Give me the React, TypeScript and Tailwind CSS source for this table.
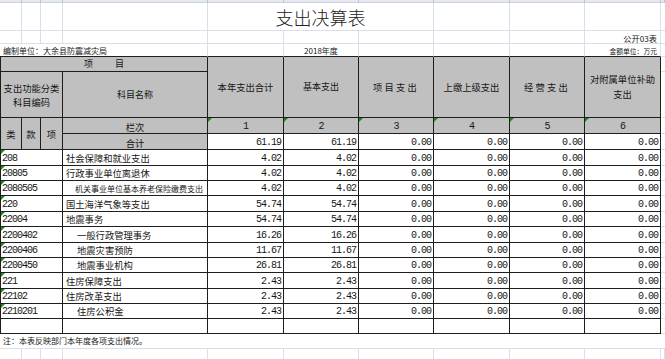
import React from "react";

const D = "border-[#1e1e1e]";
const L = "border-[#d9deea]";
const CJK = "font-['Noto_Sans_CJK_SC',sans-serif]";
const NUM = "font-['Liberation_Mono','Noto_Sans_CJK_SC',monospace] text-[10px] tracking-[-1px]";

const Tri = () => (
  <span className="absolute left-0 top-0 h-0 w-0 border-t-[4px] border-r-[4px] border-t-[#1a8a1a] border-r-transparent" />
);

type Row = { code: string; name: string; total: string; basic: string; indent?: boolean; small?: boolean; h: string };

const rows: Row[] = [
  { code: "208", name: "社会保障和就业支出", total: "4.02", basic: "4.02", h: "h-[16px]" },
  { code: "20805", name: "行政事业单位离退休", total: "4.02", basic: "4.02", h: "h-[15px]" },
  { code: "2080505", name: "机关事业单位基本养老保险缴费支出", total: "4.02", basic: "4.02", indent: true, small: true, h: "h-[15px]" },
  { code: "220", name: "国土海洋气象等支出", total: "54.74", basic: "54.74", h: "h-[16px]" },
  { code: "22004", name: "地震事务", total: "54.74", basic: "54.74", h: "h-[15px]" },
  { code: "2200402", name: "一般行政管理事务", total: "16.26", basic: "16.26", indent: true, h: "h-[16px]" },
  { code: "2200406", name: "地震灾害预防", total: "11.67", basic: "11.67", indent: true, h: "h-[15px]" },
  { code: "2200450", name: "地震事业机构", total: "26.81", basic: "26.81", indent: true, h: "h-[15px]" },
  { code: "221", name: "住房保障支出", total: "2.43", basic: "2.43", h: "h-[16px]" },
  { code: "22102", name: "住房改革支出", total: "2.43", basic: "2.43", h: "h-[15px]" },
  { code: "2210201", name: "住房公积金", total: "2.43", basic: "2.43", indent: true, h: "h-[15px]" },
];

const widths = ["w-[22px]", "w-[19px]", "w-[22px]", "w-[145px]", "w-[76px]", "w-[75px]", "w-[75px]", "w-[76px]", "w-[75px]", "w-[76px]", "w-[4px]"];

const cellD = `p-0 border-r border-b ${D}`;
const cellL = `p-0 border-r border-b ${L}`;
const lastRowTop = "p-0 border-r border-b border-r-[#d9deea] border-b-[#1e1e1e]";

const Val = ({ v }: { v: string }) => (
  <td className={`${cellD} bg-white text-right align-bottom pr-[2px] pb-[1px] leading-[10px] ${NUM}`}>{v}</td>
);

export default function App() {
  return (
    <div className={`w-[665px] h-[359px] overflow-hidden bg-white text-[#161616] ${CJK}`}>
      <table className="border-separate border-spacing-0 table-fixed w-[665px]">
        <colgroup>
          {widths.map((w, i) => (
            <col key={i} className={w} />
          ))}
        </colgroup>
        <tbody>
          {/* column header strip */}
          <tr className="h-[3px]">
            {widths.map((_, i) => (
              <td key={i} className="p-0 bg-[#e6eaf0] border-r border-b border-r-[#b8c3d1] border-b-[#c9d2de]" />
            ))}
          </tr>
          {/* title row */}
          <tr className="h-[28px]">
            <td className={cellL} />
            <td className={cellL} />
            <td className={cellL} />
            <td className={cellL} />
            <td colSpan={3} className={`${cellL} text-center align-middle text-[18px] leading-[20px] font-light text-[#222]`}>
              支出决算表
            </td>
            <td className={cellL} />
            <td className={cellL} />
            <td className={cellL} />
            <td className={`p-0 border-b ${L}`} />
          </tr>
          {/* 公开03表 */}
          <tr className="h-[13px]">
            <td className={cellL} />
            <td className={cellL} />
            <td className={cellL} />
            <td className={cellL} />
            <td className={cellL} />
            <td className={cellL} />
            <td className={cellL} />
            <td className={cellL} />
            <td className={cellL} />
            <td className={`${cellL} text-right pr-[3px] text-[8.2px] leading-[10px] align-bottom`}>公开03表</td>
            <td className={`p-0 border-b ${L}`} />
          </tr>
          {/* 编制单位 */}
          <tr className="h-[13px]">
            <td colSpan={4} className={`${lastRowTop} pl-[3px] text-[8px] leading-[10px] align-bottom whitespace-nowrap`}>
              编制单位：大余县防震减灾局
            </td>
            <td className={lastRowTop} />
            <td className={`${lastRowTop} text-center text-[8px] leading-[10px] align-bottom whitespace-nowrap`}>2018年度</td>
            <td className={lastRowTop} />
            <td className={lastRowTop} />
            <td className={lastRowTop} />
            <td className={`${lastRowTop} text-right pr-[3px] text-[6.8px] leading-[10px] align-bottom whitespace-nowrap`}>
              金额单位：万元
            </td>
            <td className={`p-0 border-b ${L}`} />
          </tr>
          {/* header row 1 */}
          <tr className="h-[15px]">
            <td colSpan={4} className={`${cellD} border-l bg-[#c0c0c0] text-center text-[9px] leading-[10px] align-middle`}>
              项<span className="inline-block w-[22px]" />目
            </td>
            <td rowSpan={2} className={`${cellD} bg-[#c0c0c0] text-center text-[9.3px] leading-[12px]`}>本年支出合计</td>
            <td rowSpan={2} className={`${cellD} bg-[#c0c0c0] text-center text-[9px] leading-[12px]`}>基本支出</td>
            <td rowSpan={2} className={`${cellD} bg-[#c0c0c0] text-center text-[9.3px] leading-[12px] tracking-[2.2px]`}>项目支出</td>
            <td rowSpan={2} className={`${cellD} bg-[#c0c0c0] text-center text-[9.3px] leading-[12px]`}>上缴上级支出</td>
            <td rowSpan={2} className={`${cellD} bg-[#c0c0c0] text-center text-[9.3px] leading-[12px] tracking-[2.2px]`}>经营支出</td>
            <td rowSpan={2} className={`${cellD} bg-[#c0c0c0] text-center text-[9.3px] leading-[15px]`}>
              对附属单位补助
              <br />
              支出
            </td>
            <td className={`p-0 border-b ${L}`} />
          </tr>
          {/* header row 2 */}
          <tr className="h-[46px]">
            <td colSpan={3} className={`${cellD} border-l bg-[#c0c0c0] text-center text-[9.3px] leading-[14px]`}>
              支出功能分类
              <br />
              科目编码
            </td>
            <td className={`${cellD} bg-[#c0c0c0] text-center text-[9px] leading-[12px]`}>科目名称</td>
            <td className={`p-0 border-b ${L}`} />
          </tr>
          {/* header row 3 */}
          <tr className="h-[16px]">
            <td rowSpan={2} className={`${cellD} border-l bg-[#c0c0c0] text-center text-[9.3px] leading-[12px]`}>类</td>
            <td rowSpan={2} className={`${cellD} bg-[#c0c0c0] text-center text-[9.3px] leading-[12px]`}>款</td>
            <td rowSpan={2} className={`${cellD} bg-[#c0c0c0] text-center text-[9.3px] leading-[12px]`}>项</td>
            <td className={`${cellD} bg-[#c0c0c0] text-center text-[9.3px] leading-[10px] align-bottom pb-[1px]`}>栏次</td>
            {["1", "2", "3", "4", "5", "6"].map((n) => (
              <td key={n} className={`${cellD} relative bg-[#c0c0c0] text-center align-bottom pb-[1px] leading-[10px] ${NUM}`}>
                <Tri />
                {n}
              </td>
            ))}
            <td className={`p-0 border-b ${L}`} />
          </tr>
          {/* header row 4 */}
          <tr className="h-[16px]">
            <td className={`${cellD} bg-[#c0c0c0] text-center text-[9.3px] leading-[10px] align-bottom pb-[1px]`}>合计</td>
            <Val v="61.19" />
            <Val v="61.19" />
            <Val v="0.00" />
            <Val v="0.00" />
            <Val v="0.00" />
            <Val v="0.00" />
            <td className={`p-0 border-b ${L}`} />
          </tr>
          {rows.map((r) => (
            <tr key={r.code} className={r.h}>
              <td colSpan={3} className={`${cellD} border-l relative bg-white align-bottom pl-[1px] pb-[1px] leading-[10px] ${NUM}`}>
                <Tri />
                {r.code}
              </td>
              <td
                className={`${cellD} bg-white align-bottom pb-[1px] whitespace-nowrap ${
                  r.small ? "text-[8px] leading-[10px]" : "text-[9.3px] leading-[11px]"
                } ${r.indent ? (r.small ? "pl-[12px]" : "pl-[14px]") : "pl-[3px]"}`}
              >
                {r.name}
              </td>
              <Val v={r.total} />
              <Val v={r.basic} />
              <Val v="0.00" />
              <Val v="0.00" />
              <Val v="0.00" />
              <Val v="0.00" />
              <td className={`p-0 border-b ${L}`} />
            </tr>
          ))}
          {/* blank row */}
          <tr className="h-[15px]">
            <td colSpan={3} className={`${cellD} border-l bg-white`} />
            <td className={`${cellD} bg-white`} />
            <td className={`${cellD} bg-white`} />
            <td className={`${cellD} bg-white`} />
            <td className={`${cellD} bg-white`} />
            <td className={`${cellD} bg-white`} />
            <td className={`${cellD} bg-white`} />
            <td className={`${cellD} bg-white`} />
            <td className={`p-0 border-b ${L}`} />
          </tr>
          {/* note row */}
          <tr className="h-[15px]">
            <td colSpan={11} className={`p-0 border-b ${L} pl-[3px] text-[8px] leading-[10px] align-middle whitespace-nowrap`}>
              注：本表反映部门本年度各项支出情况。
            </td>
          </tr>
          {/* last row */}
          <tr className="h-[10px]">
            {widths.map((_, i) => (
              <td key={i} className={`p-0 border-r ${L}`} />
            ))}
          </tr>
        </tbody>
      </table>
    </div>
  );
}
